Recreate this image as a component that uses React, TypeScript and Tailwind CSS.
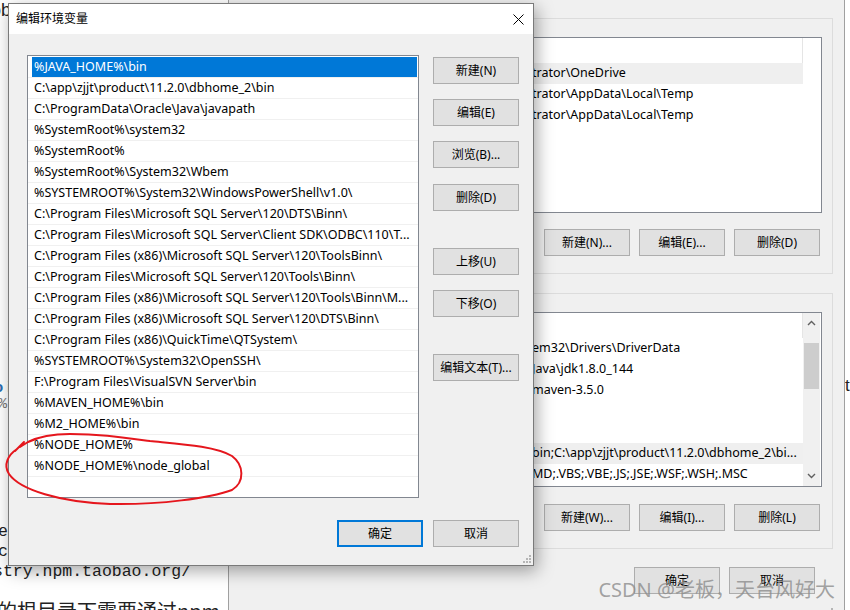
import React from "react";

const ui = "font-['Noto_Sans','Noto_Sans_CJK_SC',sans-serif]";

const paths = [
  "%JAVA_HOME%\\bin",
  "C:\\app\\zjjt\\product\\11.2.0\\dbhome_2\\bin",
  "C:\\ProgramData\\Oracle\\Java\\javapath",
  "%SystemRoot%\\system32",
  "%SystemRoot%",
  "%SystemRoot%\\System32\\Wbem",
  "%SYSTEMROOT%\\System32\\WindowsPowerShell\\v1.0\\",
  "C:\\Program Files\\Microsoft SQL Server\\120\\DTS\\Binn\\",
  "C:\\Program Files\\Microsoft SQL Server\\Client SDK\\ODBC\\110\\T...",
  "C:\\Program Files (x86)\\Microsoft SQL Server\\120\\ToolsBinn\\",
  "C:\\Program Files\\Microsoft SQL Server\\120\\Tools\\Binn\\",
  "C:\\Program Files (x86)\\Microsoft SQL Server\\120\\Tools\\Binn\\M...",
  "C:\\Program Files (x86)\\Microsoft SQL Server\\120\\DTS\\Binn\\",
  "C:\\Program Files (x86)\\QuickTime\\QTSystem\\",
  "%SYSTEMROOT%\\System32\\OpenSSH\\",
  "F:\\Program Files\\VisualSVN Server\\bin",
  "%MAVEN_HOME%\\bin",
  "%M2_HOME%\\bin",
  "%NODE_HOME%",
  "%NODE_HOME%\\node_global",
  "",
];

// background dialog rows: the first part sits under the front dialog
type BgRow = { hidden: string; shown: string; sel?: boolean };

const userVars: BgRow[] = [
  { hidden: "C:\\Users\\Adminis", shown: "trator\\OneDrive", sel: true },
  { hidden: "C:\\Users\\Adminis", shown: "trator\\AppData\\Local\\Temp" },
  { hidden: "C:\\Users\\Adminis", shown: "trator\\AppData\\Local\\Temp" },
];

const sysVars: BgRow[] = [
  { hidden: "C:\\Windows\\Syst", shown: "em32\\Drivers\\DriverData" },
  { hidden: "C:\\Program Files\\", shown: "Java\\jdk1.8.0_144" },
  { hidden: "D:\\apache-", shown: "maven-3.5.0" },
  { hidden: "8", shown: "" },
  { hidden: "Windows_NT", shown: "" },
  { hidden: "C:\\ProgramData\\Oracle\\Java\\javapath;%JAVA_HOME%\\", shown: "bin;C:\\app\\zjjt\\product\\11.2.0\\dbhome_2\\bi...", sel: true },
  { hidden: ".COM;.EXE;.BAT;.C", shown: "MD;.VBS;.VBE;.JS;.JSE;.WSF;.WSH;.MSC" },
];

function WinButton({ label, primary = false }: { label: string; primary?: boolean }) {
  return (
    <button
      className={`flex h-[27px] w-[86px] shrink-0 items-center justify-center bg-[#e1e1e1] text-[12px] text-black ${
        primary ? "border-2 border-[#0078d7]" : "border border-[#adadad]"
      }`}
    >
      {label}
    </button>
  );
}

function Chevron({ down = false }: { down?: boolean }) {
  return (
    <svg width="9" height="6" viewBox="0 0 9 6" className={down ? "rotate-180" : ""}>
      <path d="M1 5 L4.5 1.5 L8 5" fill="none" stroke="#606060" strokeWidth="1.4" />
    </svg>
  );
}

function Grip() {
  return (
    <svg width="8" height="8" viewBox="0 0 8 8">
      <rect x="6" y="0" width="2" height="2" fill="#b5b5b5" />
      <rect x="3" y="3" width="2" height="2" fill="#b5b5b5" />
      <rect x="6" y="3" width="2" height="2" fill="#b5b5b5" />
      <rect x="0" y="6" width="2" height="2" fill="#b5b5b5" />
      <rect x="3" y="6" width="2" height="2" fill="#b5b5b5" />
      <rect x="6" y="6" width="2" height="2" fill="#b5b5b5" />
    </svg>
  );
}

function BgList({ rows, scroll, h }: { rows: BgRow[]; scroll?: boolean; h: string }) {
  return (
    <div className={`flex border border-[#828790] bg-white ${h}`}>
      <div className="w-[551px] shrink-0">
        <div className="h-[25px] border-r border-[#e5e5e5]" />
        {rows.map((r, i) => (
          <div
            key={i}
            className={`flex h-[21px] items-center overflow-hidden text-[12.5px] text-black ${r.sel ? "bg-[#efefef]" : ""}`}
          >
            <span className="w-[280px] shrink-0 overflow-hidden whitespace-nowrap text-right">{r.hidden}</span>
            <span className="whitespace-nowrap">{r.shown}</span>
          </div>
        ))}
      </div>
      {scroll && (
        <div className="flex w-[17px] flex-col bg-[#f0f0f0]">
          <div className="flex h-[20px] items-center justify-center">
            <Chevron />
          </div>
          <div className="flex-1">
            <div className="mx-[1px] mt-[10px] h-[46px] bg-[#cdcdcd]" />
          </div>
          <div className="flex h-[20px] items-center justify-center">
            <Chevron down />
          </div>
        </div>
      )}
    </div>
  );
}

function BackWindow() {
  return (
    <div className={`absolute left-[228px] top-[-1px] flex h-[620px] w-[617px] flex-col border border-[#a0a0a0] bg-[#f0f0f0] px-[11px] pt-[18px] ${ui}`}>
      <div className="flex flex-col border border-[#dcdcdc] px-[10px] pb-[17px] pt-[18px]">
        <BgList rows={userVars} h="h-[176px]" />
        <div className="mr-[2px] mt-[16px] flex justify-end gap-[9px]">
          <WinButton label="新建(N)..." />
          <WinButton label="编辑(E)..." />
          <WinButton label="删除(D)" />
        </div>
      </div>
      <div className="mt-[19px] flex flex-col border border-[#dcdcdc] px-[10px] pb-[17px] pt-[18px]">
        <BgList rows={sysVars} scroll h="h-[175px]" />
        <div className="mr-[2px] mt-[17px] flex justify-end gap-[9px]">
          <WinButton label="新建(W)..." />
          <WinButton label="编辑(I)..." />
          <WinButton label="删除(L)" />
        </div>
      </div>
      <div className="mr-[18px] mt-[18px] flex justify-end gap-[9px]">
        <WinButton label="确定" />
        <WinButton label="取消" />
      </div>
      <div className="mt-auto flex justify-end pb-[2px]">
        <Grip />
      </div>
    </div>
  );
}

const sideGaps = ["mt-[2px]", "mt-[15px]", "mt-[15px]", "mt-[16px]", "mt-[37px]", "mt-[15px]", "mt-[37px]"];
const sideLabels = ["新建(N)", "编辑(E)", "浏览(B)...", "删除(D)", "上移(U)", "下移(O)", "编辑文本(T)..."];

function EditDialog() {
  return (
    <div className={`absolute left-[8px] top-[3px] flex h-[563px] w-[526px] flex-col border border-[#7a7a7a] bg-[#f0f0f0] shadow-[3px_5px_16px_rgba(0,0,0,0.35)] ${ui}`}>
      <div className="flex h-[30px] items-center justify-between bg-white pl-[7px] pr-[9px]">
        <span className="text-[12px] text-black">编辑环境变量</span>
        <svg width="11" height="11" viewBox="0 0 11 11">
          <path d="M0.5 0.5 L10.5 10.5 M10.5 0.5 L0.5 10.5" stroke="#000" strokeWidth="1" />
        </svg>
      </div>
      <div className="flex flex-1 flex-col pb-[18px] pl-[18px] pr-[14px] pt-[21px]">
        <div className="flex gap-[14px]">
          <div className="h-[443px] w-[392px] overflow-hidden border border-[#828790] bg-white pt-[1px]">
            {paths.map((p, i) => (
              <div key={i} className="flex h-[21px] border-b border-[#f0f0f0]">
                <div
                  className={`ml-[4px] mr-[1px] flex flex-1 items-center overflow-hidden whitespace-nowrap pl-[2px] text-[12.5px] ${
                    i === 0 ? "bg-[#0078d7] text-white" : "text-black"
                  }`}
                >
                  {p}
                </div>
              </div>
            ))}
          </div>
          <div className="flex flex-col">
            {sideLabels.map((l, i) => (
              <div key={l} className={sideGaps[i]}>
                <WinButton label={l} />
              </div>
            ))}
          </div>
        </div>
        <div className="mt-[22px] flex justify-end gap-[10px]">
          <WinButton label="确定" primary />
          <WinButton label="取消" />
        </div>
      </div>
      <div className="absolute bottom-[2px] right-[2px]">
        <Grip />
      </div>
    </div>
  );
}

export default function App() {
  return (
    <div className="relative h-[610px] w-[850px] overflow-hidden bg-white">
      {/* blog page behind both dialogs */}
      <div className="flex h-full">
        <div className="flex w-[228px] shrink-0 flex-col text-[#222] [&>*]:shrink-0">
          <div className="-ml-[9px] h-[20px] whitespace-nowrap font-['Liberation_Sans',sans-serif] text-[18px] leading-[20px]">ob</div>
          <div className="mt-[358px] h-[18px] whitespace-nowrap font-['Liberation_Sans',sans-serif] text-[15px] font-bold leading-[18px]">
            <span className="-ml-[6px] text-[#2b6cb0]">o</span> i
          </div>
          <div className="-ml-[2px] h-[18px] whitespace-nowrap font-['Liberation_Mono',monospace] text-[15px] leading-[18px] text-[#777]">%</div>
          <div className="mt-[108px] flex h-[20px] w-[8px] justify-end overflow-hidden font-['Liberation_Mono',monospace] text-[16.5px] leading-[20px]">
            <span className="whitespace-nowrap">le</span>
          </div>
          <div className="flex h-[20px] w-[8px] justify-end overflow-hidden font-['Liberation_Mono',monospace] text-[16.5px] leading-[20px]">
            <span className="whitespace-nowrap">oc</span>
          </div>
          <div className="-ml-[7px] h-[20px] whitespace-nowrap font-['Liberation_Mono',monospace] text-[16.5px] leading-[20px]">stry.npm.taobao.org/</div>
          <div className="-ml-[3px] mt-[16px] whitespace-nowrap font-['Noto_Sans_CJK_SC',sans-serif] text-[20px] leading-[26px]">的根目录下需要通过npm</div>
        </div>
        <div className="ml-[617px] flex flex-col">
          <div className="mt-[376px] font-['Liberation_Sans',sans-serif] text-[17px] leading-[20px] text-[#222]">t</div>
        </div>
      </div>

      <BackWindow />
      <EditDialog />

      {/* red marker loop around the NODE rows */}
      <svg className="pointer-events-none absolute left-0 top-0" width="260" height="610" viewBox="0 0 260 610">
        <path
          d="M24 442 L15 451 M17 449 C8 455, 3 465, 9 474 C20 490, 60 502, 110 504 C160 505, 210 498, 232 490 C245 482, 244 465, 232 456 C215 446, 180 444, 150 441 C120 437, 100 434, 70 434 C50 434, 38 437, 28 442 L20 447"
          fill="none"
          stroke="#e5161d"
          strokeWidth="2"
          strokeLinecap="round"
          strokeLinejoin="round"
        />
      </svg>

      <div className="pointer-events-none absolute right-[15px] top-[576px] whitespace-nowrap font-['Noto_Sans','Noto_Sans_CJK_SC',sans-serif] text-[20px] leading-[28px] text-[#8c8c8c]/80">
        CSDN @老板，天台风好大
      </div>
    </div>
  );
}
